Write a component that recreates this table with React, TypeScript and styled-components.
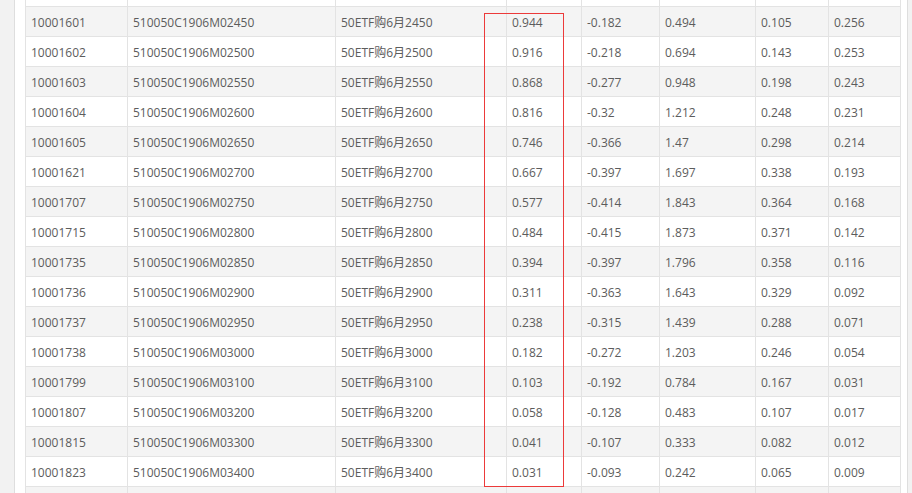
import React from "react";
import styled, { createGlobalStyle } from "styled-components";

const GlobalStyle = createGlobalStyle`
  html, body { margin: 0; padding: 0; height: 493px; overflow: hidden; background: #f2f2f2; }
  body { font-family: "Open Sans", "Noto Sans CJK SC", sans-serif; }
`;

const rows: string[][] = [
  ["10001601", "02450", "0.944", "-0.182", "0.494", "0.105", "0.256"],
  ["10001602", "02500", "0.916", "-0.218", "0.694", "0.143", "0.253"],
  ["10001603", "02550", "0.868", "-0.277", "0.948", "0.198", "0.243"],
  ["10001604", "02600", "0.816", "-0.32", "1.212", "0.248", "0.231"],
  ["10001605", "02650", "0.746", "-0.366", "1.47", "0.298", "0.214"],
  ["10001621", "02700", "0.667", "-0.397", "1.697", "0.338", "0.193"],
  ["10001707", "02750", "0.577", "-0.414", "1.843", "0.364", "0.168"],
  ["10001715", "02800", "0.484", "-0.415", "1.873", "0.371", "0.142"],
  ["10001735", "02850", "0.394", "-0.397", "1.796", "0.358", "0.116"],
  ["10001736", "02900", "0.311", "-0.363", "1.643", "0.329", "0.092"],
  ["10001737", "02950", "0.238", "-0.315", "1.439", "0.288", "0.071"],
  ["10001738", "03000", "0.182", "-0.272", "1.203", "0.246", "0.054"],
  ["10001799", "03100", "0.103", "-0.192", "0.784", "0.167", "0.031"],
  ["10001807", "03200", "0.058", "-0.128", "0.483", "0.107", "0.017"],
  ["10001815", "03300", "0.041", "-0.107", "0.333", "0.082", "0.012"],
  ["10001823", "03400", "0.031", "-0.093", "0.242", "0.065", "0.009"],
];

const Page = styled.div`
  display: flex;
  height: 493px;
  padding-left: 14px;
  padding-right: 4px;
  box-sizing: border-box;
  background: #f2f2f2;
`;

const Panel = styled.div`
  flex: 1;
  background: #fff;
  border-left: 1px solid #dedede;
  border-right: 1px solid #dedede;
  padding: 0 6px 0 10px;
  overflow: hidden;
`;

const Table = styled.div`
  position: relative;
  border-left: 1px solid #e3e3e3;
  width: 876px;
  box-sizing: border-box;
`;

const Row = styled.div<{ $striped?: boolean; $h: number }>`
  display: grid;
  grid-template-columns: 102px 208px 171px 75px 78px 96px 73px 72px;
  height: ${(p) => p.$h}px;
  box-sizing: border-box;
  border-bottom: 1px solid #e3e3e3;
  background: ${(p) => (p.$striped ? "#f4f4f4" : "#fff")};
`;

const Cell = styled.div`
  border-right: 1px solid #e3e3e3;
  padding: 1px 6px 0 5px;
  font-size: 12px;
  color: #5c5c5c;
  display: flex;
  align-items: center;
  white-space: nowrap;
  overflow: hidden;
`;

const Highlight = styled.div`
  position: absolute;
  left: 458px;
  top: 13px;
  width: 80px;
  height: 474px;
  box-sizing: border-box;
  border: 1px solid #ec3a3a;
  pointer-events: none;
`;

const EmptyCells = () => (
  <>
    {Array.from({ length: 8 }).map((_, i) => (
      <Cell key={i} />
    ))}
  </>
);

export default function App() {
  return (
    <>
      <GlobalStyle />
      <Page>
        <Panel>
          <Table>
            <Row $h={7}>
              <EmptyCells />
            </Row>
            {rows.map((r, i) => (
              <Row key={r[0]} $h={30} $striped={i % 2 === 0}>
                <Cell>{r[0]}</Cell>
                <Cell>510050C1906M{r[1]}</Cell>
                <Cell>50ETF购6月{r[1].slice(1)}</Cell>
                <Cell>{r[2]}</Cell>
                <Cell>{r[3]}</Cell>
                <Cell>{r[4]}</Cell>
                <Cell>{r[5]}</Cell>
                <Cell>{r[6]}</Cell>
              </Row>
            ))}
            <Row $h={30} $striped>
              <EmptyCells />
            </Row>
            <Highlight />
          </Table>
        </Panel>
      </Page>
    </>
  );
}
